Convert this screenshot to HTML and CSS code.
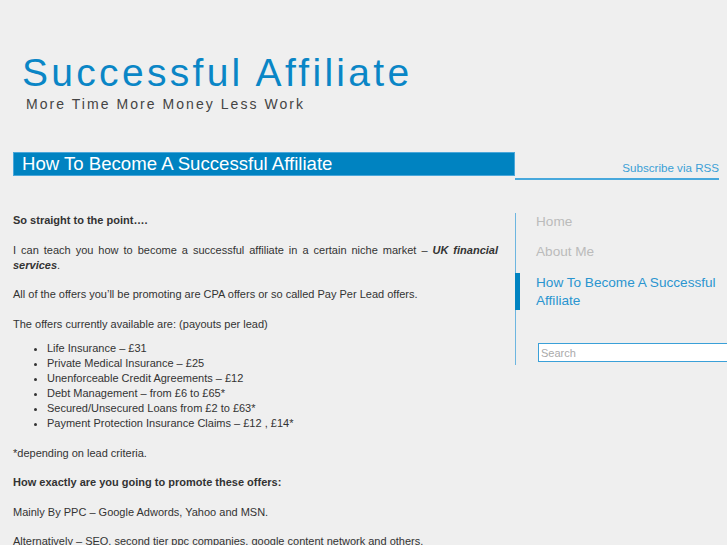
FILE: index.html
```html
<!DOCTYPE html>
<html lang="en">
<head>
<meta charset="UTF-8">
<title>Successful Affiliate</title>
<link rel="stylesheet" href="styles.css">
</head>
<body>
<div id="header">
    <h1 class="site-title">Successful Affiliate</h1>
    <div class="tagline">More Time More Money Less Work</div>
</div>

<div id="wrap">
    <div id="main">
        <h2 class="post-title">How To Become A Successful Affiliate</h2>
        <div class="entry">
            <p><strong>So straight to the point….</strong></p>
            <p>I can teach you how to become a successful affiliate in a certain niche market – <strong><em>UK financial services</em></strong>.</p>
            <p>All of the offers you’ll be promoting are CPA offers or so called Pay Per Lead offers.</p>
            <p class="lead-in">The offers currently available are: (payouts per lead)</p>
            <ul>
                <li>Life Insurance – £31</li>
                <li>Private Medical Insurance – £25</li>
                <li>Unenforceable Credit Agreements – £12</li>
                <li>Debt Management – from £6 to £65*</li>
                <li>Secured/Unsecured Loans from £2 to £63*</li>
                <li>Payment Protection Insurance Claims – £12 , £14*</li>
            </ul>
            <p>*depending on lead criteria.</p>
            <p><strong>How exactly are you going to promote these offers:</strong></p>
            <p>Mainly By PPC – Google Adwords, Yahoo and MSN.</p>
            <p>Alternatively – SEO, second tier ppc companies, google content network and others.</p>
        </div>
    </div>

    <div id="sidebar">
        <div class="subscribe"><a href="#">Subscribe via RSS</a></div>
        <ul class="nav">
            <li><a href="#">Home</a></li>
            <li><a href="#">About Me</a></li>
            <li class="current"><a href="#">How To Become A Successful Affiliate</a></li>
            <li class="search"><input type="text" placeholder="Search"></li>
        </ul>
    </div>
</div>
</body>
</html>
```

FILE: styles.css
```css
body {
  margin: 0;
  background-color: #efefef;
  font-family: 'Liberation Sans', Arial, Helvetica, sans-serif;
  color: #333;
  overflow: hidden;
}

a {
  text-decoration: none;
}

#header {
  padding: 51px 0 0 22px;
  height: 102px;
  box-sizing: border-box;
}

.site-title {
  margin: 0;
  font-size: 39px;
  line-height: 44px;
  font-weight: normal;
  letter-spacing: 3.3px;
  color: #0a86c6;
}

.tagline {
  margin: 1px 0 0 4px;
  font-size: 14px;
  line-height: 16px;
  letter-spacing: 2.05px;
  color: #444;
}

#wrap {
  display: flex;
  margin-top: 50px;
}

#main {
  width: 502px;
  margin-left: 13px;
  flex-shrink: 0;
}

.post-title {
  margin: 0;
  height: 24px;
  box-sizing: border-box;
  padding-left: 8px;
  background-color: #0083c1;
  border: 1px solid #4aa7da;
  color: #fff;
  font-size: 18.6px;
  line-height: 22px;
  font-weight: normal;
}

.entry {
  padding: 37px 17px 0 0;
  font-size: 11px;
  line-height: 15px;
}

.entry p {
  margin: 0 0 14.5px;
  text-align: justify;
}

.entry p.lead-in {
  margin-bottom: 9px;
}

.entry ul {
  margin: 0 0 15px;
  padding-left: 34px;
}

#sidebar {
  width: 212px;
  min-width: 0;
  flex-shrink: 0;
}

.subscribe {
  height: 28px;
  box-sizing: border-box;
  margin-right: 8px;
  padding-top: 9px;
  text-align: right;
  border-bottom: 2px solid #47a8dc;
  font-size: 11.6px;
  line-height: 14px;
  white-space: nowrap;
}

.subscribe a {
  color: #3a9fd6;
}

.nav {
  list-style: none;
  margin: 33px 0 0;
  padding: 0 0 3px;
  border-left: 1px solid #6db6e0;
}

.nav li {
  margin: 0 0 12px -1px;
  padding-left: 16px;
  border-left: 5px solid transparent;
  font-size: 13.6px;
  line-height: 18px;
}

.nav li a {
  color: #bbb;
}

.nav li.current {
  border-left-color: #0083c1;
  padding-top: 1px;
  margin-bottom: 33px;
}

.nav li.current a {
  color: #2a95d0;
}

.nav li.search {
  margin-bottom: 0;
  padding-left: 18px;
}

.search input {
  display: block;
  width: 220px;
  height: 19px;
  box-sizing: border-box;
  margin: 0;
  padding: 0 2px;
  border: 1px solid #3aa0d8;
  background-color: #fff;
  font-family: 'Liberation Sans', Arial, sans-serif;
  font-size: 11px;
  outline: none;
}

.search input::placeholder {
  color: #aaa;
}
```
